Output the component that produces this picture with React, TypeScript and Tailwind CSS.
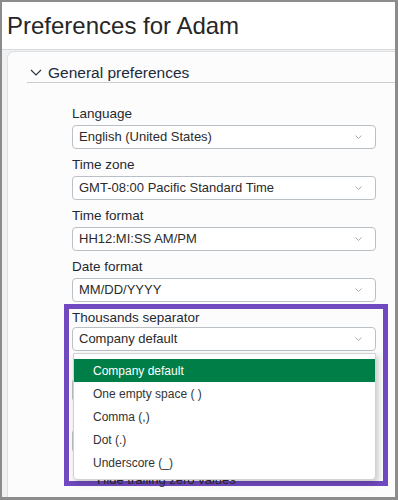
import React from 'react'

const fields = [
  { label: 'Language', value: 'English (United States)' },
  { label: 'Time zone', value: 'GMT-08:00 Pacific Standard Time' },
  { label: 'Time format', value: 'HH12:MI:SS AM/PM' },
  { label: 'Date format', value: 'MM/DD/YYYY' },
]

const options = ['Company default', 'One empty space ( )', 'Comma (,)', 'Dot (.)', 'Underscore (_)']

function Select({ value }: { value: string }) {
  return (
    <div className="h-[24px] rounded-[4px] border border-[#b9c1c7] bg-white flex items-center pl-[6px] pr-[13px] text-[13px] text-[#2b2b2b]">
      <span className="flex-1 truncate">{value}</span>
      <svg width="7" height="4" viewBox="0 0 7 4">
        <path d="M0.5 0.5 L3.5 3.5 L6.5 0.5" fill="none" stroke="#9ca2a7" strokeWidth="0.9" />
      </svg>
    </div>
  )
}

function Field({ label, value, last }: { label: string; value: string; last?: boolean }) {
  return (
    <div className={last ? 'mb-[2px]' : 'mb-[7px]'}>
      <div className="h-[17px] leading-[17px] text-[13.5px] text-[#1e2933] mb-[3px]">{label}</div>
      <Select value={value} />
    </div>
  )
}

export default function App() {
  return (
    <div className="w-[398px] h-[500px] overflow-hidden bg-white border-l-2 border-t-2 border-r-[3px] border-b-[3px] border-[#8c8c8c] font-['Liberation_Sans',Arial,sans-serif]">
      {/* page title */}
      <div className="h-[47px] flex items-center pl-[5px] text-[24px] text-[#262626]">Preferences for Adam</div>

      <div className="h-full border-t border-[#d6dadd] bg-[#eff1f2] pl-[5px] pt-[1px]">
        <div className="h-full rounded-tl-[7px] border-l border-t border-[#dde1e4] bg-[#fcfcfc]">
          {/* section header */}
          <div className="ml-[19px] pt-[11px] h-[31px] border-b border-[#c9ced2] flex items-center pl-[3px] gap-[6px]">
            <svg width="12" height="7" viewBox="0 0 12 7">
              <path d="M1 1 L6 6 L11 1" fill="none" stroke="#2a3540" strokeWidth="1.2" />
            </svg>
            <span className="text-[15.5px] text-[#1b2a3a]">General preferences</span>
          </div>

          <div className="ml-[64px] w-[304px] pt-[22px]">
            {fields.map((f, i) => (
              <Field key={f.label} label={f.label} value={f.value} last={i === fields.length - 1} />
            ))}

            {/* highlighted field with open dropdown */}
            <div className="relative w-[324px] h-[182px] -ml-[8px] border-[5px] border-[#7149c1] pl-[3px] pr-[7px]">
              <div className="h-[17px] leading-[17px] text-[13.5px] text-[#1e2933] mb-[1px]">Thousands separator</div>
              <Select value="Company default" />

              {/* fields hidden behind the open list */}
              <div className="mt-[27px] h-[24px] rounded-[4px] border border-[#b9c1c7] bg-white" />
              <div className="mt-[27px] h-[24px] rounded-[4px] border border-[#b9c1c7] bg-white" />
              <div className="mt-[19px] pl-[25px] h-[16px] leading-[16px] text-[13px] text-[#2b2b2b]">Hide trailing zero values</div>

              <div className="absolute z-10 top-[44px] left-[4px] w-[303px] border border-[#cfd3d6] rounded-b-[4px] bg-white pt-[5px] pb-[4px] shadow-[2px_3px_6px_rgba(0,0,0,0.22)]">
                {options.map((o, i) => (
                  <div
                    key={o}
                    className={
                      i === 0
                        ? 'h-[23.2px] flex items-center pl-[19px] text-[12px] bg-[#007e48] text-white'
                        : 'h-[23.2px] flex items-center pl-[19px] text-[12px] text-[#333]'
                    }
                  >
                    {o}
                  </div>
                ))}
              </div>
            </div>
          </div>
        </div>
      </div>
    </div>
  )
}
